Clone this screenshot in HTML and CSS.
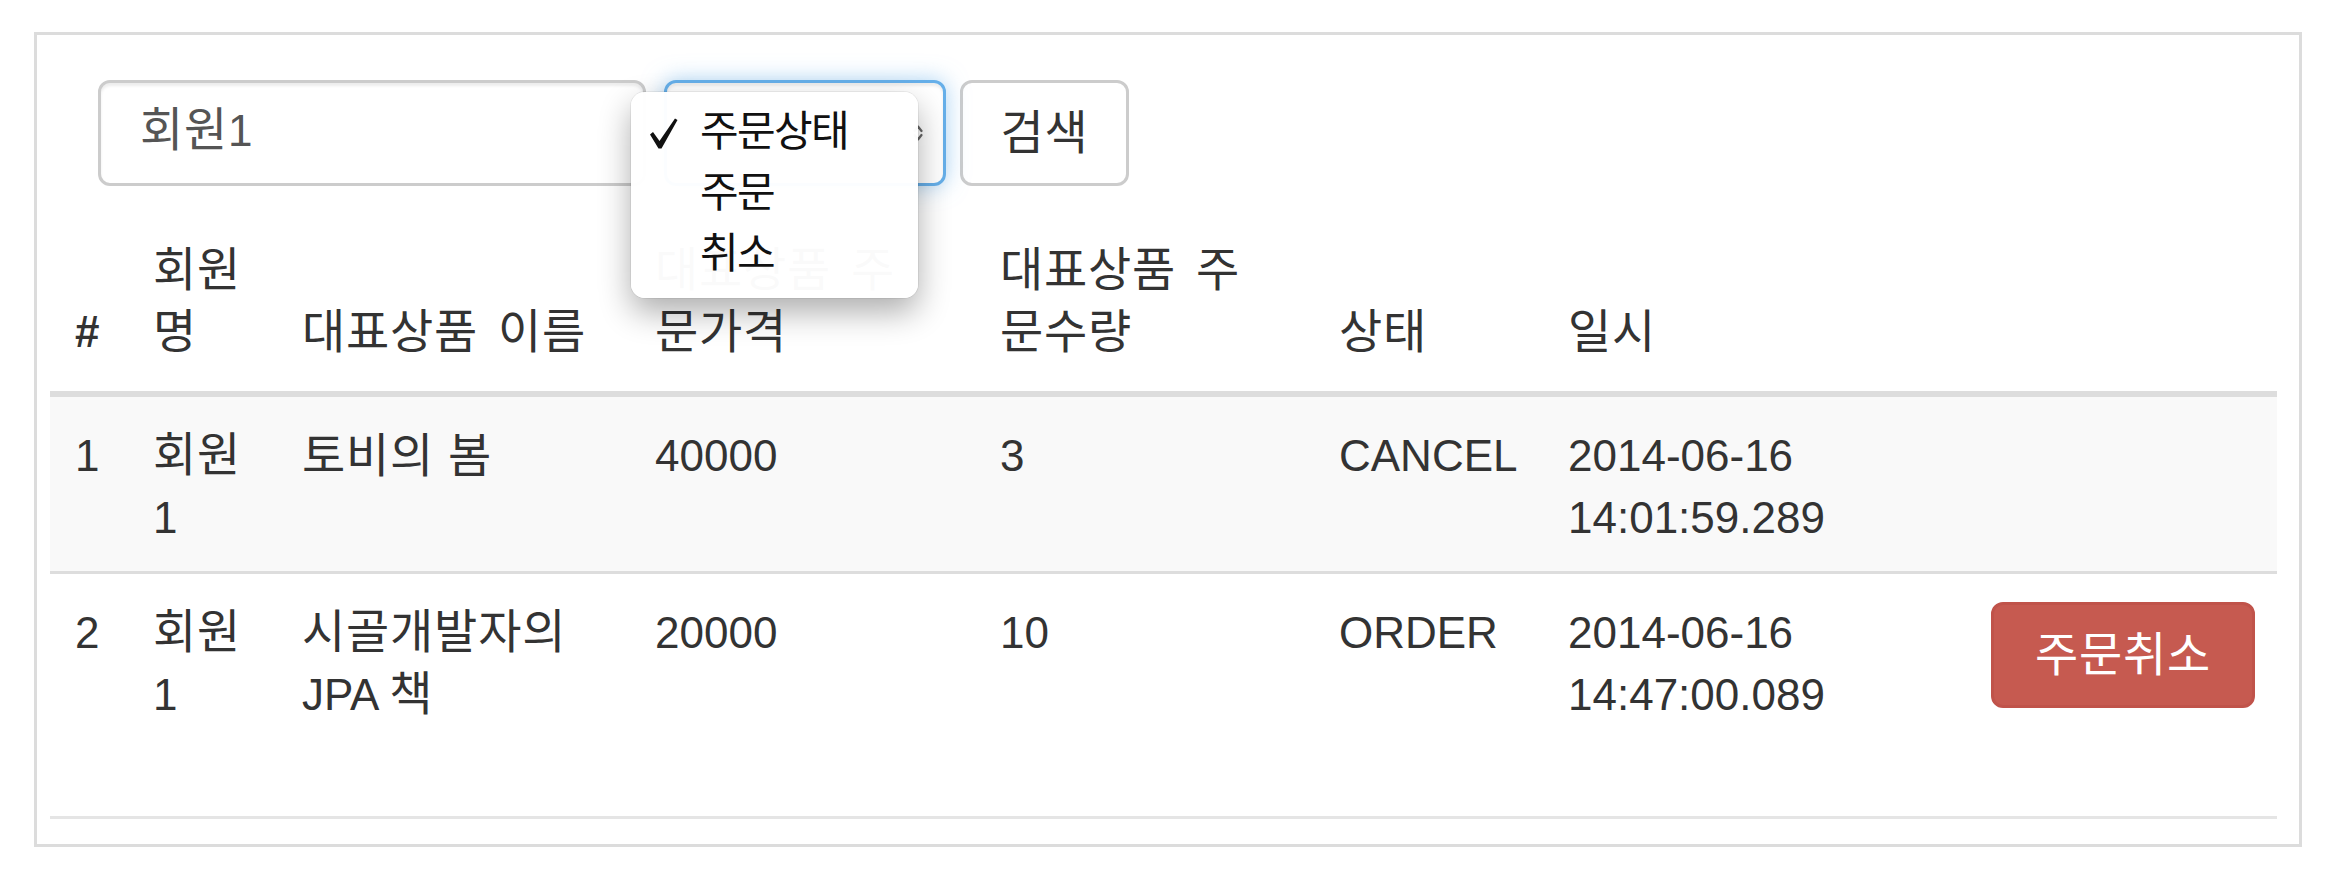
FILE: index.html
```html
<!DOCTYPE html>
<html lang="ko">
<head>
<meta charset="utf-8">
<title>주문 내역</title>
<link rel="stylesheet" href="styles.css">
</head>
<body>
<div class="frame">
  <form class="search">
    <div class="field name-field"><span class="ko">회원</span>1</div>
    <div class="field select-field">
      <span class="select-text">주문상태</span>
      <svg class="select-arrows" width="10" height="20" viewBox="0 0 10 20"><path d="M1.5 8 L5 3.5 L8.5 8 M1.5 12 L5 16.5 L8.5 12" fill="none" stroke="#666" stroke-width="2.2" stroke-linecap="round" stroke-linejoin="round"/></svg>
      <ul class="popup">
        <li><span class="mark"><svg width="28" height="31" viewBox="0 0 28 31"><path d="M0 16.5 L3 14 L9.5 23 L25 0.5 L27.5 2 L11.5 30.5 L8.5 30.5 Z" fill="#111"/></svg></span>주문상태</li>
        <li><span class="mark"></span>주문</li>
        <li><span class="mark"></span>취소</li>
      </ul>
    </div>
    <button type="button" class="btn ko">검색</button>
  </form>

  <table class="orders">
    <colgroup>
      <col class="c-num">
      <col class="c-member">
      <col class="c-item">
      <col class="c-price">
      <col class="c-count">
      <col class="c-status">
      <col class="c-date">
      <col class="c-action">
    </colgroup>
    <thead>
      <tr>
        <th class="num">#</th>
        <th class="ko">회원<br>명</th>
        <th class="ko">대표상품 이름</th>
        <th class="ko">대표상품 주<br>문가격</th>
        <th class="ko">대표상품 주<br>문수량</th>
        <th class="ko">상태</th>
        <th class="ko">일시</th>
        <th></th>
      </tr>
    </thead>
    <tbody>
      <tr class="striped">
        <td>1</td>
        <td><span class="ko">회원</span>1</td>
        <td class="ko">토비의 봄</td>
        <td>40000</td>
        <td>3</td>
        <td>CANCEL</td>
        <td>2014-06-16 14:01:59.289</td>
        <td></td>
      </tr>
      <tr>
        <td>2</td>
        <td><span class="ko">회원</span>1</td>
        <td><span class="ko">시골개발자의</span> JPA <span class="ko">책</span></td>
        <td>20000</td>
        <td>10</td>
        <td>ORDER</td>
        <td>2014-06-16 14:47:00.089</td>
        <td><a href="#" class="btn-danger ko">주문취소</a></td>
      </tr>
    </tbody>
  </table>
  <div class="footer"></div>
</div>
</body>
</html>
```

FILE: styles.css
```css
* { box-sizing: border-box; }
html, body { margin: 0; padding: 0; background: #fff; }
body {
  font-family: "Liberation Sans", "Noto Sans CJK KR", sans-serif;
  font-size: 44px;
  line-height: 62px;
  color: #333;
}
.ko {
  font-size: 47px;
  letter-spacing: 0.8px;
}
span.ko { line-height: 1; }
.frame {
  width: 2268px;
  height: 815px;
  margin: 32px 0 0 34px;
  border: 3px solid #dcdcdc;
  padding: 45px 22px 0 13px;
}
.search {
  display: flex;
  margin: 0 0 0 48px;
  height: 106px;
}
.field {
  height: 106px;
  border: 3px solid #ccc;
  border-radius: 12px;
  background: #fff;
  box-shadow: inset 0 3px 3px rgba(0,0,0,.075);
  padding: 17px 39px 0;
  color: #555;
  white-space: nowrap;
}
.name-field {
  width: 548px;
  margin-right: 18px;
}
.select-field {
  position: relative;
  width: 282px;
  margin-right: 14px;
  padding: 17px 0 0 33px;
  border-color: #66afe9;
  box-shadow: inset 0 3px 3px rgba(0,0,0,.075), 0 0 22px rgba(102,175,233,.55);
}
.select-text {
  font-size: 42px;
  letter-spacing: -1.6px;
  line-height: 1;
}
.select-arrows {
  position: absolute;
  right: 20px;
  top: 40px;
}
.popup {
  position: absolute;
  left: -36px;
  top: 9px;
  width: 287px;
  height: 206px;
  margin: 0;
  padding: 9px 0 0;
  list-style: none;
  background: rgba(255,255,255,.978);
  border-radius: 14px;
  box-shadow: 0 14px 32px rgba(0,0,0,.32), 0 0 0 1px rgba(0,0,0,.06);
  font-size: 42px;
  letter-spacing: -1.6px;
  color: #111;
  z-index: 10;
}
.popup li {
  display: flex;
  align-items: center;
  height: 61px;
  padding-left: 19px;
}
.mark {
  flex: none;
  width: 50px;
  display: flex;
  align-items: center;
  padding-top: 4px;
}
.btn {
  width: 169px;
  height: 106px;
  border: 3px solid #ccc;
  border-radius: 12px;
  background: #fff;
  color: #333;
  font-family: inherit;
  line-height: 62px;
  padding: 0;
  margin: 0;
}
.orders {
  width: 2227px;
  table-layout: fixed;
  border-collapse: separate;
  border-spacing: 0;
  margin-top: 31px;
}
.c-num { width: 78px; }
.c-member { width: 149px; }
.c-item { width: 353px; }
.c-price { width: 345px; }
.c-count { width: 339px; }
.c-status { width: 229px; }
.c-date { width: 423px; }
.c-action { width: 311px; }
.orders th {
  text-align: left;
  vertical-align: bottom;
  font-weight: normal;
  white-space: nowrap;
  word-spacing: 6px;
  padding: 22px 25px 28px;
  border-bottom: 6px solid #ddd;
}
.orders th.num { font-weight: bold; }
.orders td {
  vertical-align: top;
  padding: 28px 25px 22px;
}
.orders tr.striped td {
  background: #f9f9f9;
  border-bottom: 3px solid #ddd;
}
.btn-danger {
  display: inline-block;
  vertical-align: middle;
  padding: 19px 41px;
  border: 3px solid #c0534a;
  border-radius: 12px;
  background: #c65a50;
  color: #fff;
  text-decoration: none;
  white-space: nowrap;
}
.footer {
  margin-top: 68px;
  border-top: 3px solid #e5e5e5;
}
```
